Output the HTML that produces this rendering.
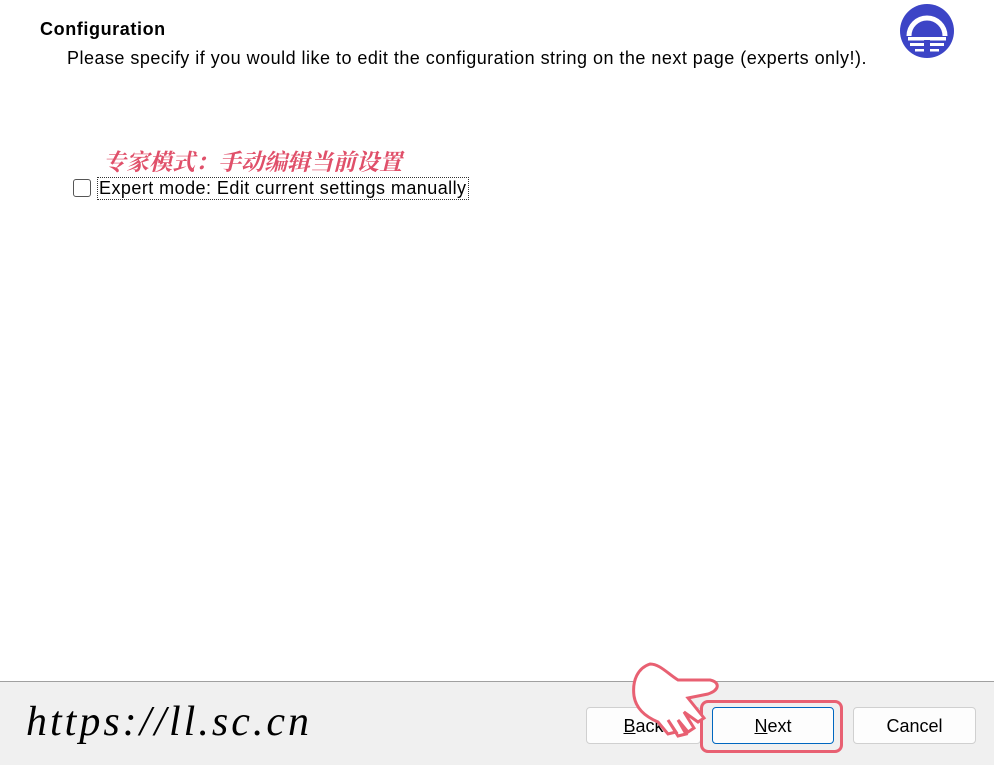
<html><head><style>
body{margin:0;width:994px;height:764px;position:relative;background:#fff;font-family:"Liberation Sans","Noto Sans CJK SC",sans-serif;overflow:hidden}
.t{position:absolute;white-space:nowrap}
.btn{position:absolute;top:707px;height:37px;background:#fdfdfd;border:1px solid #d0d0d0;border-radius:4px;font-size:18px;text-align:center;line-height:37px;box-sizing:border-box}
</style></head><body>
<div class="t" style="left:40px;top:19px;font-size:18px;font-weight:bold;letter-spacing:0.6px">Configuration</div>
<div class="t" style="left:67px;top:48px;font-size:18px;letter-spacing:0.48px">Please specify if you would like to edit the configuration string on the next page (experts only!).</div>
<svg style="position:absolute;left:898px;top:2px" width="58" height="58" viewBox="0 0 58 58">
<circle cx="29" cy="29" r="27" fill="#3c44c6"/>
<path d="M11 34 A18 18 0 0 1 47 34" fill="none" stroke="#fff" stroke-width="5"/>
<path d="M16 33 A13 13 0 0 1 42 33 Z" fill="#3c44c6"/>
<rect x="10" y="35" width="38" height="3.5" fill="#fff"/>
<rect x="12" y="41" width="34" height="3" fill="#fff"/>
<rect x="17" y="47" width="24" height="2.5" fill="#fff"/>
<rect x="26" y="38" width="6" height="14" fill="#3c44c6"/>
</svg>
<div class="t" style="left:103px;top:144px;font-size:23px;color:#e0506a;font-family:'Noto Serif CJK SC',serif;font-style:italic;font-weight:bold">专家模式：手动编辑当前设置</div>
<div style="position:absolute;left:73px;top:179px;width:18px;height:18px;border:1px solid #555;border-radius:3px;box-sizing:border-box"></div>
<div class="t" style="left:97px;top:177px;font-size:18px;letter-spacing:0.45px;border:1px dotted #333;padding:0 1px">Expert mode: Edit current settings manually</div>
<div style="position:absolute;left:0;top:681px;width:994px;height:83px;background:#f0f0f0;border-top:1px solid #a0a0a0"></div>
<div class="t" style="left:26px;top:698px;font-size:42px;font-family:'Liberation Serif',serif;font-style:italic;letter-spacing:3px">https://ll.sc.cn</div>
<div class="btn" style="left:586px;width:115px"><u>B</u>ack</div>
<div class="btn" style="left:712px;width:122px;border:1px solid #0067c0"><u>N</u>ext</div>
<div class="btn" style="left:853px;width:123px">Cancel</div>
<div style="position:absolute;left:700px;top:700px;width:143px;height:53px;border:3px solid #e86072;border-radius:8px;box-sizing:border-box"></div>
<svg style="position:absolute;left:628px;top:660px" width="120" height="100"><path d="M22 4 C10 8 4 20 6 36 C8 48 16 56 30 62 L40 74 L48 72 L40 60 L50 76 L58 74 L50 60 L60 72 L66 68 L56 52 L70 62 L76 58 L60 38 L80 34 C92 30 92 22 82 20 L50 20 C40 14 32 4 22 4 Z" fill="#fff" stroke="#e86072" stroke-width="3"/></svg>
</body></html>
